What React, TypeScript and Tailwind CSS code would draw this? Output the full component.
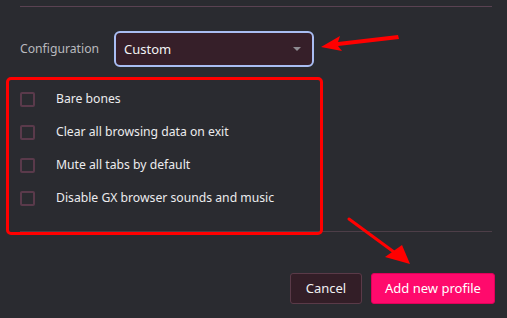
const options = [
  'Bare bones',
  'Clear all browsing data on exit',
  'Mute all tabs by default',
  'Disable GX browser sounds and music',
];

const App = () => {
  return (
    <div
      className="relative w-[507px] h-[318px] overflow-hidden bg-[#2a2b30] px-[20px] pt-[6px] text-[12.2px]"
      style={{ fontFamily: '"Noto Sans", "Open Sans", sans-serif' }}
    >
      <div className="h-px w-[472px] bg-[#5a4252]" />

      <div className="mt-[24px] flex items-center">
        <span className="w-[94px] text-[#b9b9be]">Configuration</span>
        <div className="flex h-[36px] w-[200px] items-center justify-between rounded-[6px] border-2 border-[#a9bdf2] bg-[#361f29] pl-[8px] pr-[11px] text-[13px] text-[#f2f2f4]">
          <span className="pt-[2px]">Custom</span>
          <svg width="8" height="4" viewBox="0 0 8 4">
            <path d="M0 0 L8 0 L4 4 Z" fill="#8e8c92" />
          </svg>
        </div>
      </div>

      <ul className="mt-[16px]">
        {options.map((label) => (
          <li key={label} className="flex h-[33px] items-center">
            <span className="h-[15px] w-[15px] rounded-[2px] border-2 border-[#5a3a4b]" />
            <span className="ml-[21px] text-[#ececee]">{label}</span>
          </li>
        ))}
      </ul>

      <div className="mt-[16px] h-px w-[472px] bg-[#4d3e48]" />

      <div className="mt-[41px] -mr-[8px] flex justify-end gap-[9px]">
        <button className="h-[31px] w-[72px] rounded-[3px] border border-[#5a3a48] bg-[#331e27] text-[13px] text-[#f0f0f2]">
          Cancel
        </button>
        <button className="h-[31px] w-[124px] rounded-[3px] border border-[#e0005a] bg-[#ff0a6c] text-[13px] text-white">
          Add new profile
        </button>
      </div>

      {/* annotations */}
      <div className="pointer-events-none absolute left-[6px] top-[77px] h-[158px] w-[317px] rounded-[5px] border-[3px] border-[#ff0000]" />
      <svg className="pointer-events-none absolute left-0 top-0" width="507" height="318">
        <polygon points="398,35 399,39 338,46 342,51 321,47 340,36 338,42" fill="#ff0000" />
        <line x1="349" y1="219" x2="398" y2="255" stroke="#ff0000" strokeWidth="3" strokeLinecap="round" />
        <polygon points="410,264 385,257 402,245" fill="#ff0000" />
      </svg>
    </div>
  );
};

export default App;
